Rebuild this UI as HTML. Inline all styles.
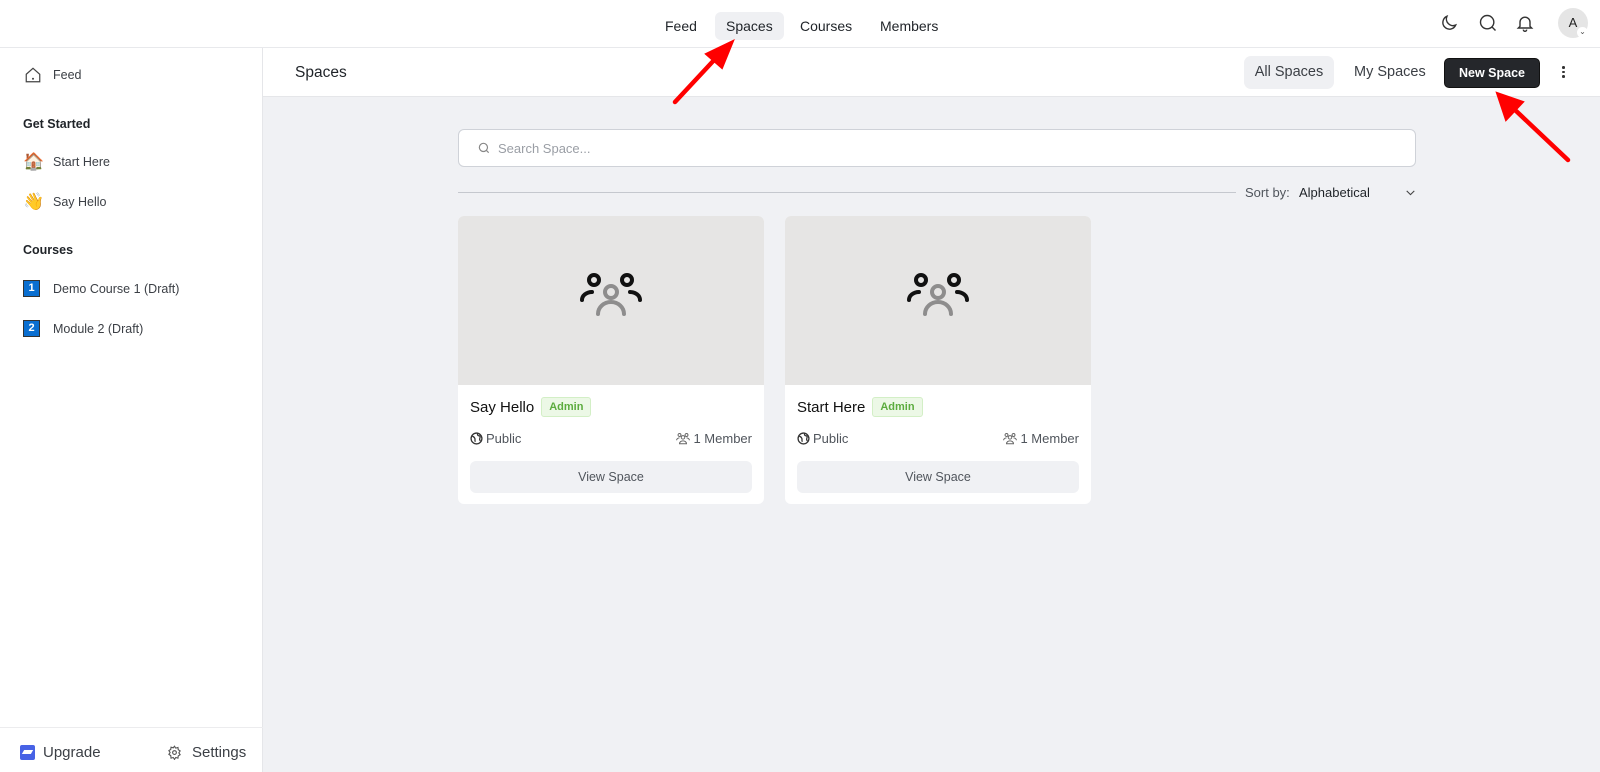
<!DOCTYPE html>
<html><head><meta charset="utf-8"><style>
*{box-sizing:border-box;margin:0;padding:0}
body{width:1600px;height:772px;overflow:hidden;background:#f0f1f4;font-family:"Liberation Sans",sans-serif;color:#1f2328;position:relative}
.abs{position:absolute}
.top{left:0;top:0;width:1600px;height:48px;background:#fff;border-bottom:1px solid #e8e9ec}
.nav{top:12px;font-size:14px;color:#1f2328;height:28px;line-height:28px;padding:0 11px;border-radius:6px}
.side{left:0;top:48px;width:263px;height:724px;background:#fff;border-right:1px solid #e5e6e9}
.si{font-size:12.5px;color:#3b3f45;left:53px}
.sh{font-size:12.5px;font-weight:bold;left:23px;color:#1f2328}
.sub{left:263px;top:48px;width:1337px;height:49px;background:#fff;border-bottom:1px solid #e5e6e9}
.card{background:#fff;border-radius:6px;width:306px;height:288px;top:216px;overflow:hidden}
.card .img{height:169px;background:#e6e5e4;position:relative}
.ct{position:absolute;left:12px;top:181px;font-size:15px;color:#111}
.badge{display:inline-block;font-size:11px;color:#5cac3e;background:#ecf8e6;border:1px solid #d3efc6;border-radius:3px;padding:3px 7px;margin-left:7px;vertical-align:2px;font-weight:bold}
.pub{position:absolute;left:12px;top:215px;font-size:13px;color:#50555c}
.mem{position:absolute;right:12px;top:215px;font-size:13px;color:#50555c}
.pub svg,.mem svg{vertical-align:-2px;margin-right:3px}
.vb{position:absolute;left:12px;right:12px;top:245px;height:32px;background:#f0f1f4;border-radius:6px;text-align:center;line-height:32px;font-size:12.5px;color:#50555c}
.num{display:inline-block;width:17px;height:17px;background:#0a6fd1;border:1.5px solid #333;color:#fff;font-size:11px;font-weight:bold;text-align:center;line-height:14px;position:absolute;left:23px}
</style></head><body>
<div class="abs top"></div>
<div class="abs nav" style="left:654px">Feed</div>
<div class="abs nav" style="left:715px;background:#eff0f3">Spaces</div>
<div class="abs nav" style="left:789px">Courses</div>
<div class="abs nav" style="left:869px">Members</div>
<svg class="abs" style="left:1439px;top:13px" width="20" height="20" viewBox="0 0 24 24" fill="none" stroke="#333" stroke-width="1.7"><path d="M20 14.5A8 8 0 0 1 9.5 4 8 8 0 1 0 20 14.5z"/></svg>
<svg class="abs" style="left:1478px;top:13px" width="20" height="20" viewBox="0 0 24 24" fill="none" stroke="#333" stroke-width="1.7"><circle cx="11" cy="11" r="8"/><path d="M17 17l4 4"/></svg>
<svg class="abs" style="left:1515px;top:13px" width="20" height="20" viewBox="0 0 24 24" fill="none" stroke="#333" stroke-width="1.7"><path d="M6 16V11a6 6 0 0 1 12 0v5l2 2H4z"/><path d="M10 20a2 2 0 0 0 4 0"/></svg>
<div class="abs" style="left:1558px;top:8px;width:30px;height:30px;border-radius:50%;background:#e5e5e5;text-align:center;line-height:30px;font-size:13px;color:#222">A</div>
<div class="abs" style="left:1577px;top:27px;width:11px;height:11px;border-radius:50%;background:#fff;font-size:8px;text-align:center;line-height:9px;color:#555">⌄</div>

<div class="abs side"></div>
<svg class="abs" style="left:24px;top:66px" width="18" height="18" viewBox="0 0 24 24" fill="none" stroke="#444" stroke-width="1.6"><path d="M3 11l9-8 9 8v10H3z"/><circle cx="12" cy="17" r=".6" fill="#444"/></svg>
<div class="abs si" style="top:68px">Feed</div>
<div class="abs sh" style="top:117px">Get Started</div>
<div class="abs" style="left:23px;top:152px;font-size:17px">🏠</div>
<div class="abs si" style="top:155px">Start Here</div>
<div class="abs" style="left:23px;top:192px;font-size:17px">👋</div>
<div class="abs si" style="top:195px">Say Hello</div>
<div class="abs sh" style="top:243px">Courses</div>
<div class="num" style="top:280px">1</div>
<div class="abs si" style="top:282px">Demo Course 1 (Draft)</div>
<div class="num" style="top:320px">2</div>
<div class="abs si" style="top:322px">Module 2 (Draft)</div>
<div class="abs" style="left:0;top:727px;width:263px;border-top:1px solid #ececee"></div>
<div class="abs" style="left:20px;top:745px;width:15px;height:15px;background:#4762e5;border-radius:2px"></div>
<div class="abs" style="left:23px;top:750px;width:9px;height:4px;border-top:2px solid #fff;border-bottom:2px solid #fff;transform:skewX(-30deg)"></div>
<div class="abs" style="left:43px;top:744px;font-size:15px;color:#3b3f45">Upgrade</div>
<svg class="abs" style="left:167px;top:745px" width="15" height="15" viewBox="0 0 24 24" fill="none" stroke="#555" stroke-width="1.8"><circle cx="12" cy="12" r="3"/><path d="M12 2l2 3 3.5-1 .5 3.5 3 2-2 3 2 3-3 2-.5 3.5-3.5-1-2 3-2-3-3.5 1L6 17l-3-2 2-3-2-3 3-2 .5-3.5 3.5 1z"/></svg>
<div class="abs" style="left:192px;top:744px;font-size:15px;color:#3b3f45">Settings</div>

<div class="abs sub"></div>
<div class="abs" style="left:295px;top:64px;font-size:15.5px;color:#1f2328">Spaces</div>
<div class="abs" style="left:1244px;top:56px;width:90px;height:33px;background:#eff0f3;border-radius:7px;text-align:center;line-height:33px;font-size:14.5px;color:#3b3f45">All Spaces</div>
<div class="abs" style="left:1354px;top:56px;line-height:33px;font-size:14.5px;color:#3b3f45">My Spaces</div>
<div class="abs" style="left:1444px;top:58px;width:96px;height:30px;background:#25272b;border:1px solid #111;border-radius:5px;text-align:center;line-height:28px;font-size:12.5px;font-weight:bold;color:#fff">New Space</div>
<div class="abs" style="left:1562px;top:66px;width:3px;line-height:0">
<div style="width:2.5px;height:2.5px;background:#333;border-radius:50%;margin-bottom:2px"></div><div style="width:2.5px;height:2.5px;background:#333;border-radius:50%;margin-bottom:2px"></div><div style="width:2.5px;height:2.5px;background:#333;border-radius:50%"></div></div>

<div class="abs" style="left:458px;top:129px;width:958px;height:38px;background:#fff;border:1px solid #cfd2d8;border-radius:6px"></div>
<svg class="abs" style="left:477px;top:141px" width="14" height="14" viewBox="0 0 24 24" fill="none" stroke="#888" stroke-width="2"><circle cx="11" cy="11" r="7"/><path d="M16 16l4 4"/></svg>
<div class="abs" style="left:498px;top:141px;font-size:13px;color:#9a9ea5">Search Space...</div>
<div class="abs" style="left:458px;top:192px;width:778px;border-top:1px solid #c5c8ce"></div>
<div class="abs" style="left:1245px;top:185px;font-size:13px;color:#50555c">Sort by:</div>
<div class="abs" style="left:1299px;top:185px;font-size:13px;color:#1f2328">Alphabetical</div>
<svg class="abs" style="left:1404px;top:186px" width="13" height="13" viewBox="0 0 24 24" fill="none" stroke="#444" stroke-width="2"><path d="M5 9l7 7 7-7"/></svg>

<div class="abs card" style="left:458px">
<div class="img"><svg style="position:absolute;left:121px;top:56px" width="64" height="52" viewBox="0 0 64 52" fill="none" stroke-width="4" stroke-linecap="round"><circle cx="15" cy="8" r="5" stroke="#111"/><circle cx="48" cy="8" r="5" stroke="#111"/><path d="M3 28a10 8 0 0 1 10-8" stroke="#111"/><path d="M61 28a10 8 0 0 0-10-8" stroke="#111"/><circle cx="32" cy="20" r="6" stroke="#8e8d8d"/><path d="M19 42a13 12 0 0 1 26 0" stroke="#8e8d8d"/></svg></div>
<div class="ct">Say Hello<span class="badge">Admin</span></div>
<div class="pub"><svg width="13" height="13" viewBox="0 0 24 24" fill="none" stroke="#333" stroke-width="2.4"><circle cx="12" cy="12" r="10"/><path d="M4 8c3 0 4 2 5 4s-1 4 1 6M14 3c-1 3 1 4 3 4s2 3 1 5 1 4 1 5"/></svg>Public</div>
<div class="mem"><svg width="14" height="13" viewBox="0 0 24 22" fill="none" stroke="#666" stroke-width="1.7"><circle cx="6" cy="5" r="2.5"/><circle cx="18" cy="5" r="2.5"/><circle cx="12" cy="9" r="3"/><path d="M1 14a5 4 0 0 1 5-4M23 14a5 4 0 0 0-5-4M6 20a6 5 0 0 1 12 0z"/></svg>1 Member</div>
<div class="vb">View Space</div></div>

<div class="abs card" style="left:785px">
<div class="img"><svg style="position:absolute;left:121px;top:56px" width="64" height="52" viewBox="0 0 64 52" fill="none" stroke-width="4" stroke-linecap="round"><circle cx="15" cy="8" r="5" stroke="#111"/><circle cx="48" cy="8" r="5" stroke="#111"/><path d="M3 28a10 8 0 0 1 10-8" stroke="#111"/><path d="M61 28a10 8 0 0 0-10-8" stroke="#111"/><circle cx="32" cy="20" r="6" stroke="#8e8d8d"/><path d="M19 42a13 12 0 0 1 26 0" stroke="#8e8d8d"/></svg></div>
<div class="ct">Start Here<span class="badge">Admin</span></div>
<div class="pub"><svg width="13" height="13" viewBox="0 0 24 24" fill="none" stroke="#333" stroke-width="2.4"><circle cx="12" cy="12" r="10"/><path d="M4 8c3 0 4 2 5 4s-1 4 1 6M14 3c-1 3 1 4 3 4s2 3 1 5 1 4 1 5"/></svg>Public</div>
<div class="mem"><svg width="14" height="13" viewBox="0 0 24 22" fill="none" stroke="#666" stroke-width="1.7"><circle cx="6" cy="5" r="2.5"/><circle cx="18" cy="5" r="2.5"/><circle cx="12" cy="9" r="3"/><path d="M1 14a5 4 0 0 1 5-4M23 14a5 4 0 0 0-5-4M6 20a6 5 0 0 1 12 0z"/></svg>1 Member</div>
<div class="vb">View Space</div></div>

<svg class="abs" style="left:0;top:0" width="1600" height="772">
<g stroke="#f00" stroke-width="4.5" stroke-linecap="round" fill="#f00">
<line x1="675" y1="102" x2="716" y2="58"/><polygon points="733,41 706,54 722,68" stroke-width="2"/>
<line x1="1568" y1="160" x2="1514" y2="109"/><polygon points="1497,93 1506,120 1523,102" stroke-width="2"/>
</g></svg>
</body></html>
